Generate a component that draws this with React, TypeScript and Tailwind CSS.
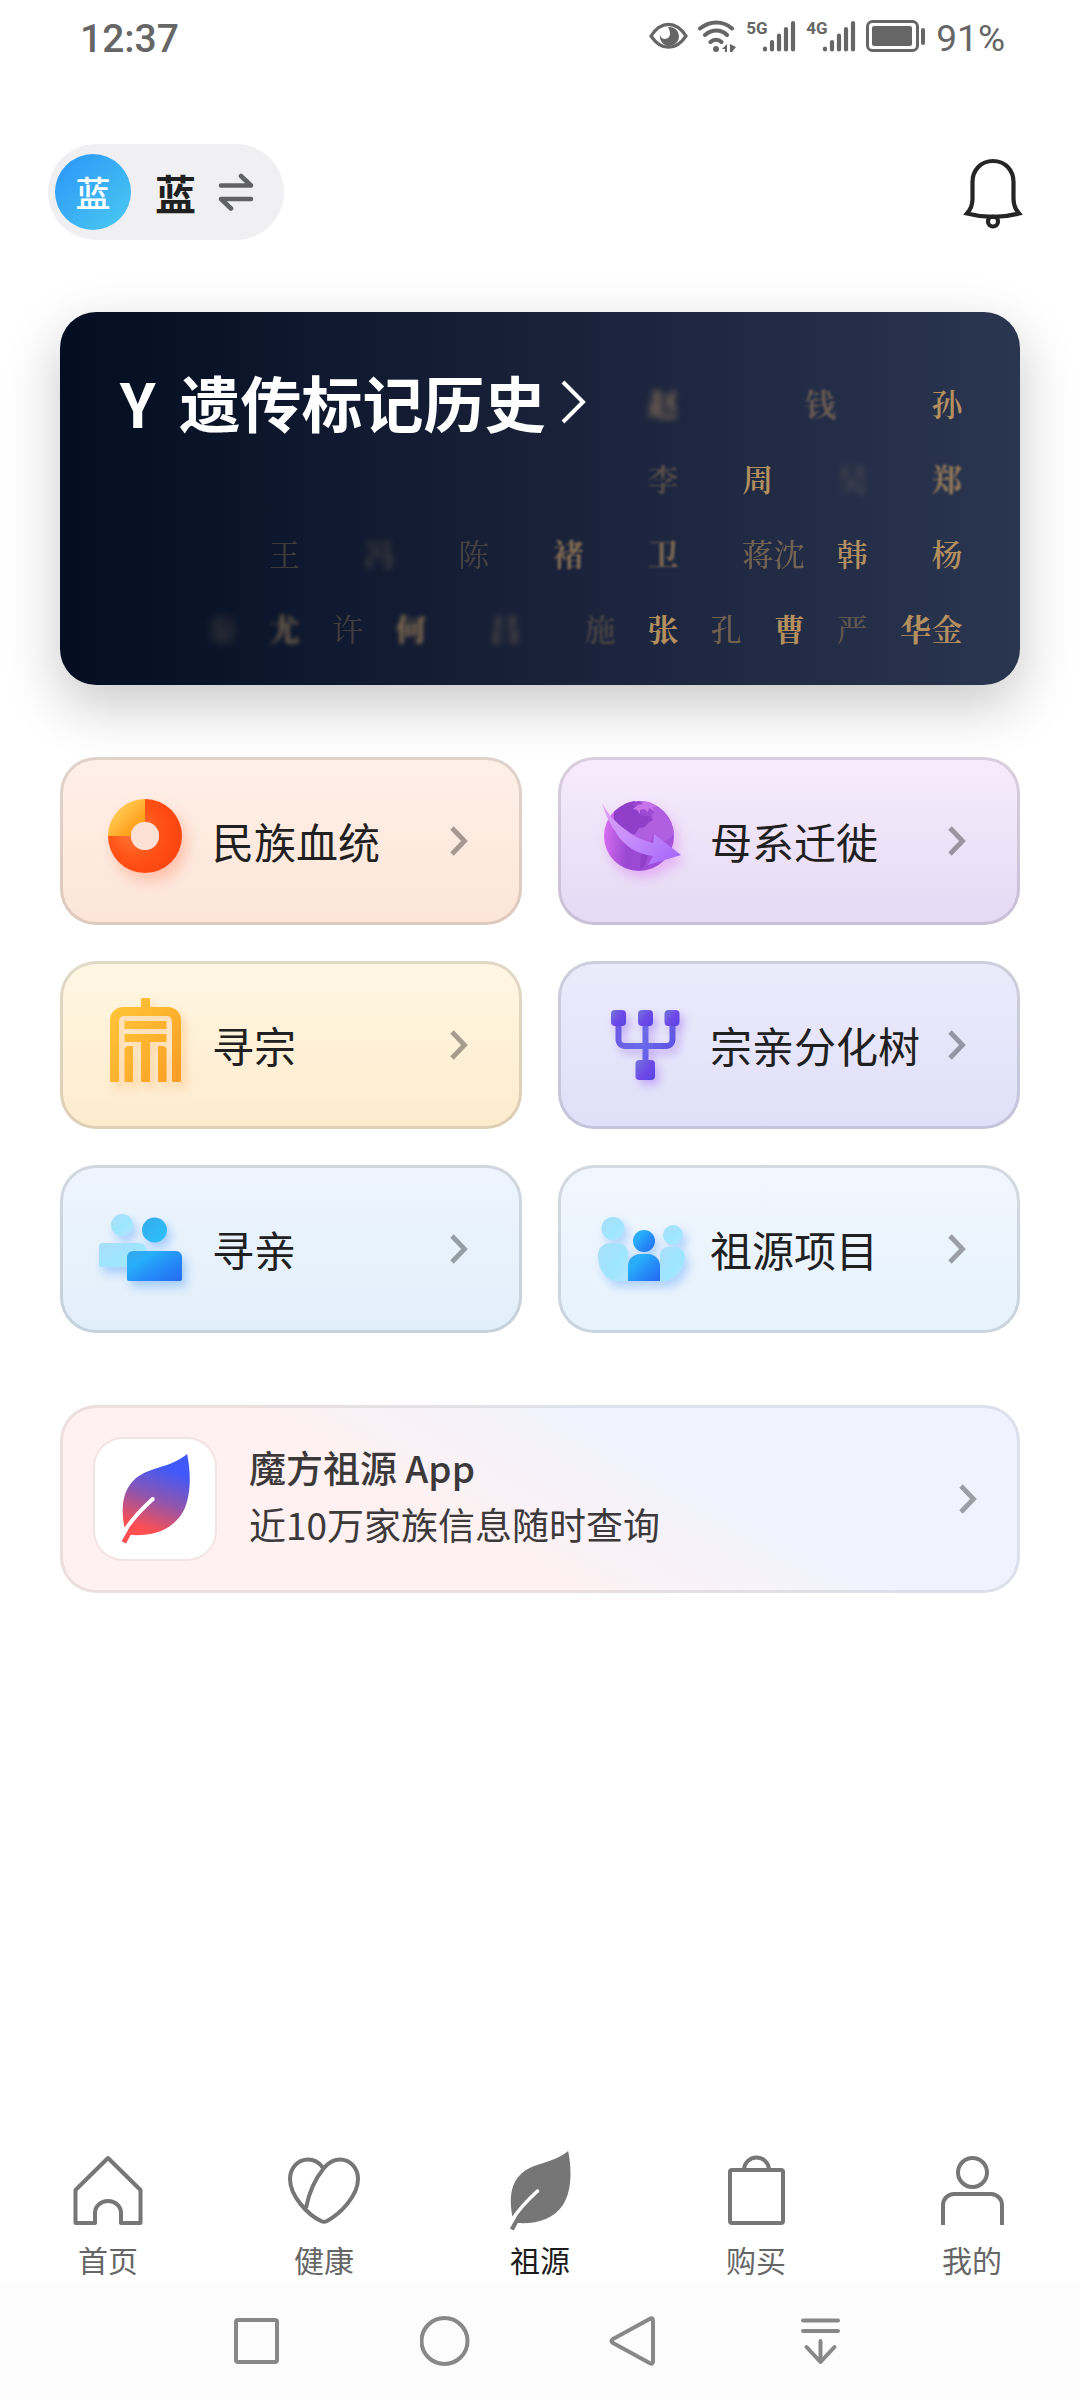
import { useState } from 'react';
import type { ReactNode } from 'react';
import clsx from 'clsx';

type Surname = { char: string; col: string; look: string };

const surnames: Surname[] = [
  { char: '赵', col: 'col-start-15 row-start-1', look: 'font-bold opacity-65 blur-[3px]' },
  { char: '钱', col: 'col-start-20 row-start-1', look: 'font-bold opacity-45 blur-[1px]' },
  { char: '孙', col: 'col-start-24 row-start-1', look: 'font-semibold' },
  { char: '李', col: 'col-start-15 row-start-2', look: 'font-semibold opacity-40 blur-[1px]' },
  { char: '周', col: 'col-start-18 row-start-2', look: 'font-semibold' },
  { char: '吴', col: 'col-start-21 row-start-2', look: 'font-bold opacity-25 blur-[3px]' },
  { char: '郑', col: 'col-start-24 row-start-2', look: 'font-bold opacity-75 blur-[1px]' },
  { char: '王', col: 'col-start-3 row-start-3', look: 'opacity-30' },
  { char: '冯', col: 'col-start-6 row-start-3', look: 'font-bold opacity-30 blur-[3px]' },
  { char: '陈', col: 'col-start-9 row-start-3', look: 'opacity-30' },
  { char: '褚', col: 'col-start-12 row-start-3', look: 'font-bold opacity-65 blur-[1px]' },
  { char: '卫', col: 'col-start-15 row-start-3', look: 'font-bold opacity-60 blur-[1px]' },
  { char: '蒋', col: 'col-start-18 row-start-3', look: 'font-medium opacity-55' },
  { char: '沈', col: 'col-start-19 row-start-3', look: 'font-medium opacity-55' },
  { char: '韩', col: 'col-start-21 row-start-3', look: 'font-semibold' },
  { char: '杨', col: 'col-start-24 row-start-3', look: 'font-semibold' },
  { char: '秦', col: 'col-start-1 row-start-4', look: 'font-bold opacity-25 blur-[4px]' },
  { char: '尤', col: 'col-start-3 row-start-4', look: 'font-bold opacity-60 blur-[2px]' },
  { char: '许', col: 'col-start-5 row-start-4', look: 'opacity-30' },
  { char: '何', col: 'col-start-7 row-start-4', look: 'font-bold opacity-75 blur-[2px]' },
  { char: '吕', col: 'col-start-10 row-start-4', look: 'font-bold opacity-40 blur-[3px]' },
  { char: '施', col: 'col-start-13 row-start-4', look: 'font-semibold opacity-30 blur-[1px]' },
  { char: '张', col: 'col-start-15 row-start-4', look: 'font-bold' },
  { char: '孔', col: 'col-start-17 row-start-4', look: 'font-medium opacity-55' },
  { char: '曹', col: 'col-start-19 row-start-4', look: 'font-bold' },
  { char: '严', col: 'col-start-21 row-start-4', look: 'font-medium opacity-40' },
  { char: '华', col: 'col-start-23 row-start-4', look: 'font-bold' },
  { char: '金', col: 'col-start-24 row-start-4', look: 'font-semibold' },
];

function Chevron({ className }: { className?: string }) {
  return (
    <svg viewBox="0 0 18 30" className={clsx('h-[30px] w-[18px] shrink-0', className)} fill="none" stroke="currentColor" strokeWidth="4.800" aria-hidden="true">
      <path d="M2 2 14.500 15 2 28" />
    </svg>
  );
}

function Leaf({ fill, className }: { fill: string; className: string }) {
  return (
    <svg viewBox="-1 0 64 81" className={className} aria-hidden="true">
      <defs>
        <linearGradient id="leaf" gradientUnits="userSpaceOnUse" x1="48" y1="8" x2="24" y2="76">
          <stop offset="0.1" stopColor="#4159f9" />
          <stop offset="0.5" stopColor="#8f55ad" />
          <stop offset="0.9" stopColor="#fd4f52" />
        </linearGradient>
      </defs>
      <path fill={fill} d="M59.500 0C63.500 19 63 42 54 55 44 69 29 74 8.500 73L4.500 80.500 .5 78.500 7 67 3 66C-1 45 3 32 11 24 24 11 42 14 59.500 0Z" />
      <path d="M28.500 40.500C17 51 9 60 3 69.500" fill="none" stroke="#fff" strokeWidth="3.600" />
      <circle cx="28.500" cy="40.500" r="1.800" fill="#fff" />
    </svg>
  );
}

function DonutIcon() {
  return (
    <svg viewBox="0 0 96 96" className="size-24 drop-shadow-[5px_8px_7px_rgba(255,90,40,0.28)]" aria-hidden="true">
      <defs>
        <radialGradient id="donutRed" cx="0.35" cy="0.45" r="0.65">
          <stop offset="0" stopColor="#ff7a3a" />
          <stop offset="0.55" stopColor="#ff5316" />
          <stop offset="1" stopColor="#fb4410" />
        </radialGradient>
        <linearGradient id="donutGold" x1="0" y1="0" x2="1" y2="1">
          <stop offset="0.2" stopColor="#ffd05c" />
          <stop offset="0.7" stopColor="#ffa41f" />
        </linearGradient>
      </defs>
      <path fill="url(#donutRed)" d="M50 6a37 37 0 1 1-37 37h23a14 14 0 1 0 14-14z" />
      <path fill="url(#donutGold)" d="M50 6a37 37 0 0 0-37 37h23a14 14 0 0 1 14-14z" />
      <circle cx="50" cy="43" r="14" fill="#fbe0d4" />
    </svg>
  );
}

function GlobeIcon() {
  return (
    <svg viewBox="0 0 96 96" className="size-24 drop-shadow-[4px_7px_6px_rgba(214,90,240,0.35)]" aria-hidden="true">
      <defs>
        <linearGradient id="globe" x1="0" y1="0.5" x2="1" y2="0.6">
          <stop offset="0" stopColor="#d56df0" />
          <stop offset="0.35" stopColor="#9a48d2" />
          <stop offset="1" stopColor="#a352dd" />
        </linearGradient>
        <linearGradient id="globeArrow" x1="0" y1="0" x2="1" y2="0.8">
          <stop offset="0" stopColor="#dfa2fa" />
          <stop offset="0.5" stopColor="#c78dfb" />
          <stop offset="1" stopColor="#a869fb" />
        </linearGradient>
      </defs>
      <circle cx="46" cy="43" r="35" fill="url(#globe)" />
      {/* land masses */}
      <path fill="#b563e2" d="M56 9c15 6 24 18 25 33l-12 8-8-9-4 9-17-7-5-5 8-2 3-6 7-1 5-5 3-5-3-4-7-1 3-3z" opacity="0.8" />
      <path fill="#8f3fca" d="M21 19c6-6 13-10 21-11l-2 5 7 4-2 3 6 3 7 0 2 4-5 3-3 4-6 1-4 6-7 1-6 5-8-9zM48 60l7 2-3 10-5 5z" />
      <path fill="#c873ea" d="m40 16 5-4 4-1 1-3 6 1 8 5-5 0 2 4-5-3-1 4-4-3-4 1 0 4-3-4z" />
      <path fill="url(#globeArrow)" d="M9 10C15 21 22 29 33 37c9 7 18 11 27 13l1-9 27 21-33 10 5-9C44 61 31 53 23 40 17 31 12 21 9 10Z" />
    </svg>
  );
}

function ClanIcon() {
  return (
    <svg viewBox="0 0 96 96" className="size-24 drop-shadow-[5px_6px_4px_rgba(255,160,60,0.3)]" aria-hidden="true">
      <defs>
        <linearGradient id="clan" gradientUnits="userSpaceOnUse" x1="15" y1="15" x2="88" y2="70">
          <stop offset="0" stopColor="#ffc338" />
          <stop offset="0.5" stopColor="#feb32f" />
          <stop offset="1" stopColor="#fb9f26" />
        </linearGradient>
      </defs>
      <g fill="url(#clan)">
        <path d="M46 2a1 1 0 0 1 1-1h7a1 1 0 0 1 1 1v8h18a13 13 0 0 1 13 13v61a1 1 0 0 1-1 1h-7a1 1 0 0 1-1-1V24a5 5 0 0 0-5-5H29a5 5 0 0 0-5 5v60a1 1 0 0 1-1 1h-7a1 1 0 0 1-1-1V23a13 13 0 0 1 13-13h18z" />
        <path d="M29.500 24h42v8h-42zM29.500 37h42v8H55v40h-9V45H29.500zM29.500 51l3-2h5.500v36h-8.500zM63 49h5.500l3 2v34H63z" />
      </g>
    </svg>
  );
}

function TreeIcon() {
  return (
    <svg viewBox="0 0 96 96" className="size-24 drop-shadow-[4px_5px_4px_rgba(130,70,240,0.35)]" aria-hidden="true">
      <defs>
        <linearGradient id="treeLine" gradientUnits="userSpaceOnUse" x1="22" y1="20" x2="84" y2="60">
          <stop offset="0" stopColor="#6e54e0" />
          <stop offset="0.5" stopColor="#6a6bea" />
          <stop offset="1" stopColor="#5c4be2" />
        </linearGradient>
        <linearGradient id="treeNode" x1="0" y1="0" x2="1" y2="0.8">
          <stop offset="0" stopColor="#7277da" />
          <stop offset="0.6" stopColor="#6e48e8" />
          <stop offset="1" stopColor="#5b46e2" />
        </linearGradient>
      </defs>
      <path d="M25.500 26v17a6 6 0 0 0 6 6h42a6 6 0 0 0 6-6V26M52.500 26v42" fill="none" stroke="url(#treeLine)" strokeWidth="6" />
      <g fill="url(#treeNode)">
        <rect x="18" y="13" width="15" height="16" rx="4" />
        <rect x="45" y="13" width="15" height="16" rx="4" />
        <rect x="71.500" y="13" width="15" height="16" rx="4" />
        <rect x="42.500" y="63" width="19.500" height="20" rx="4" />
      </g>
    </svg>
  );
}

function KinIcon() {
  return (
    <svg viewBox="0 0 96 96" className="size-24 drop-shadow-[4px_6px_5px_rgba(70,150,255,0.4)]" aria-hidden="true">
      <defs>
        <linearGradient id="kinLight" x1="0" y1="0" x2="1" y2="1">
          <stop offset="0" stopColor="#a8def8" />
          <stop offset="0.6" stopColor="#9fe6ff" />
          <stop offset="1" stopColor="#b4e4ff" />
        </linearGradient>
        <linearGradient id="kinHead" x1="0" y1="0" x2="1" y2="1">
          <stop offset="0" stopColor="#37aaea" />
          <stop offset="1" stopColor="#29c2fb" />
        </linearGradient>
        <linearGradient id="kinBody" x1="0" y1="0" x2="1" y2="0.9">
          <stop offset="0" stopColor="#39a6e8" />
          <stop offset="0.3" stopColor="#27aefa" />
          <stop offset="0.6" stopColor="#258ff8" />
          <stop offset="1" stopColor="#246ff0" />
        </linearGradient>
      </defs>
      <circle cx="27" cy="24" r="11" fill="url(#kinLight)" />
      <path fill="url(#kinLight)" d="M4 46a4 4 0 0 1 4-4h37a6 6 0 0 1 6 6v18H6a2 2 0 0 1-2-2z" />
      <circle cx="59.500" cy="29" r="12.500" fill="url(#kinHead)" />
      <path fill="url(#kinBody)" d="M32 56a6 6 0 0 1 6-6h43a6 6 0 0 1 6 6v22a2 2 0 0 1-2 2H34a2 2 0 0 1-2-2z" />
    </svg>
  );
}

function ProjectIcon() {
  return (
    <svg viewBox="0 0 96 96" className="size-24 drop-shadow-[4px_6px_5px_rgba(70,150,255,0.35)]" aria-hidden="true">
      <g fill="url(#kinLight)">
        <circle cx="20" cy="27.500" r="11.500" />
        <circle cx="80" cy="34" r="10" />
        <path d="M17 42h7a11 11 0 0 1 11 11v27H24C14 80 5 69 5 54a12 12 0 0 1 12-12z" />
        <path d="M67 54a8 8 0 0 1 8-8h7a10 10 0 0 1 10 10c0 13-11 24-25 25z" />
      </g>
      <circle cx="51" cy="40" r="11" fill="url(#kinBody)" />
      <path fill="url(#kinBody)" d="M35 65a12 12 0 0 1 12-12h8a12 12 0 0 1 12 12v15H35z" />
    </svg>
  );
}

const features = [
  { label: '民族血统', icon: <DonutIcon />, tone: 'from-[#fef0e8] to-[#fde5d8]' },
  { label: '母系迁徙', icon: <GlobeIcon />, tone: 'from-[#f8ebfc] to-[#e5daf4]' },
  { label: '寻宗', icon: <ClanIcon />, tone: 'from-[#fff7e3] to-[#fdebcd]' },
  { label: '宗亲分化树', icon: <TreeIcon />, tone: 'from-[#ecebfb] to-[#e1dff9]' },
  { label: '寻亲', icon: <KinIcon />, tone: 'from-[#eef5fe] to-[#e1effa]' },
  { label: '祖源项目', icon: <ProjectIcon />, tone: 'from-[#f1f7fe] to-[#e6f2fc]' },
];

function TabIcon({ children }: { children: ReactNode }) {
  return (
    <svg viewBox="0 0 80 80" className="size-20" fill="none" stroke="#767676" strokeWidth="4" strokeLinejoin="round" aria-hidden="true">
      {children}
    </svg>
  );
}

const tabs = [
  { id: 'home', label: '首页', icon: <TabIcon><path d="M40 7 72.500 39v33H53V62a13 12 0 0 0-26 0v10H7.500V39z" /></TabIcon> },
  {
    id: 'health',
    label: '健康',
    icon: (
      <TabIcon>
        <path d="M39 17C35 11 30 8.500 24 8.500 14 8.500 6 17 6 28c0 17 18 36 31 42q3 1.500 6 0c13-7 31-25 31-42 0-11-8-19.500-18-19.500-6 0-11 2.500-16 8.500-9 11-15 24-18 40" />
      </TabIcon>
    ),
  },
  { id: 'ancestry', label: '祖源', icon: <Leaf fill="#767676" className="h-20 w-16" /> },
  {
    id: 'shop',
    label: '购买',
    icon: <TabIcon><rect x="14" y="19" width="53" height="53" rx="2" /><path d="M28 19a12.500 12.500 0 0 1 25 0" /></TabIcon>,
  },
  {
    id: 'me',
    label: '我的',
    icon: <TabIcon><circle cx="40.500" cy="21.500" r="14.500" /><path d="M11 74V54a11 11 0 0 1 11-11h37a11 11 0 0 1 11 11v20" /></TabIcon>,
  },
];

function Signal({ label }: { label: string }) {
  return (
    <div className="flex items-start">
      <span className="w-4 text-[17px] leading-4 font-bold">{label}</span>
      <svg viewBox="0 0 34 32" className="h-8 w-[34px]" stroke="currentColor" strokeWidth="4.200" strokeLinecap="round" aria-hidden="true">
        <path d="M3 28.500v1M10 22v7.500M17 15.500v14M24 9v20.500M31 3v26.500" />
      </svg>
    </div>
  );
}

function StatusBar() {
  return (
    <div className="flex h-[72px] items-center justify-between pr-[75px] pl-20 font-[Roboto,'Noto_Sans_CJK_SC',sans-serif] text-[#666]">
      <span className="pt-[6px] text-[39px] leading-10 font-medium">12:37</span>
      <div className="flex items-center gap-[10px]">
        <svg viewBox="0 0 39 28" className="h-7 w-[39px]" aria-hidden="true">
          <path d="M2 14C12-1.500 27-1.500 37 14 27 29 12 29 2 14Z" fill="none" stroke="currentColor" strokeWidth="3.200" />
          <path fill="currentColor" d="M19 5a9.500 9.500 0 1 1-8 8c1 3 3 4 5 4a5 5 0 0 0 5-5c0-3-1-5-2-7z" />
        </svg>
        <svg viewBox="0 0 38 32" className="h-8 w-[38px]" fill="none" stroke="currentColor" strokeWidth="4" strokeLinecap="round" aria-hidden="true">
          <path d="M2 8.500c10-8 23-8 32 0M7 15c7-6 16-6 22 0M12.500 22c3-3 8-3 11 0" />
          <circle cx="18" cy="29" r="3" fill="currentColor" stroke="none" />
          <path fill="currentColor" stroke="none" d="M29 24v8h-2v-3h-3zM32 24l6 3-4 5h-2z" />
        </svg>
        <Signal label="5G" />
        <Signal label="4G" />
        <svg viewBox="0 0 60 32" className="h-8 w-[60px]" aria-hidden="true">
          <rect x="1.500" y="1.500" width="50" height="29" rx="5" fill="none" stroke="currentColor" strokeWidth="3" />
          <rect x="6" y="6" width="40" height="20" rx="2" fill="currentColor" />
          <rect x="55" y="8" width="4" height="17" rx="2" fill="currentColor" />
        </svg>
        <span className="pt-[6px] text-[37px] leading-10">91%</span>
      </div>
    </div>
  );
}

export default function App() {
  const [activeTab, setActiveTab] = useState('ancestry');

  return (
    <div className="flex min-h-screen flex-col bg-white font-['Noto_Sans_CJK_SC',sans-serif] text-[#202020]">
      <StatusBar />

      <header className="flex items-center justify-between pt-[72px] pr-14 pl-12">
        <button type="button" className="flex h-24 items-center rounded-full bg-[#f0f0f2] pr-[30px] pl-[7px]">
          <span className="flex size-[76px] items-center justify-center rounded-full bg-linear-to-br from-[#2b93f8] to-[#4dcbf0] text-[35px] font-medium text-white">
            蓝
          </span>
          <span className="ml-6 text-[41px] leading-none font-bold">蓝</span>
          <svg viewBox="0 0 36 38" className="ml-[22px] h-[38px] w-9" fill="none" stroke="#616265" strokeWidth="4.600" strokeLinecap="round" strokeLinejoin="round" aria-hidden="true">
            <path d="M3 12.500h30L23 3M33 26H3l10 9.500" />
          </svg>
        </button>
        <button type="button" aria-label="消息" className="pt-1">
          <svg viewBox="0 0 62 72" className="h-[72px] w-[62px]" fill="none" stroke="#252525" strokeWidth="4.200" aria-hidden="true">
            <path d="M31 3C19 3 10.500 12 10.500 24v17c0 6-1.500 10-5.500 14.500 17 4.500 35 4.500 52 0C53 51 51.500 47 51.500 41V24C51.500 12 43 3 31 3Z" />
            <circle cx="31" cy="63.500" r="5" />
          </svg>
        </button>
      </header>

      <main className="flex flex-1 flex-col gap-[72px] px-[60px] pt-[72px]">
        <a
          href="#y-history"
          className="grid rounded-[36px] bg-linear-to-r from-[#040e22] via-[#192139] to-[#2a354f] shadow-[0_20px_56px_rgba(0,0,0,0.22)]"
        >
          <div className="z-10 col-start-1 row-start-1 flex items-center gap-4 self-start pt-12 pl-[60px] text-white">
            <h1 className="flex gap-6 text-[61px] leading-[84px] font-bold">
              <span>Y</span>
              <span>遗传标记历史</span>
            </h1>
            <svg viewBox="0 0 26 44" className="h-11 w-[26px]" fill="none" stroke="currentColor" strokeWidth="4" aria-hidden="true">
              <path d="M2 2l20 20L2 42" />
            </svg>
          </div>
          <div
            aria-hidden="true"
            className="col-start-1 row-start-1 grid grid-cols-[repeat(24,minmax(0,1fr))] pt-[53px] pr-[57px] pb-5 pl-[146px] font-['Noto_Serif_CJK_SC','Noto_Sans_CJK_SC',serif] text-[31px] leading-[75px] text-[#b5905f]"
          >
            {surnames.map(s => (
              <span key={s.char} className={clsx(s.col, s.look)}>
                {s.char}
              </span>
            ))}
          </div>
        </a>

        <nav className="grid grid-cols-2 gap-9" aria-label="祖源">
          {features.map(f => (
            <a
              key={f.label}
              href={`#${f.label}`}
              className={clsx(
                'flex h-[168px] items-center rounded-[36px] border-[3px] border-black/12 bg-linear-to-b bg-origin-border pr-[51px] pl-8',
                f.tone,
              )}
            >
              {f.icon}
              <span className="ml-[21px] flex-1 text-[42px] leading-none whitespace-nowrap">{f.label}</span>
              <Chevron className="text-black/35" />
            </a>
          ))}
        </nav>

        <a
          href="#app"
          className="flex items-center rounded-[36px] border-[3px] border-black/8 bg-[linear-gradient(30deg,#fff1f1_38%,#f0f3ff_66%)] bg-origin-border py-[29px] pr-10 pl-[30px] text-[#3c393b]"
        >
          <span className="flex size-[124px] items-center justify-center rounded-[30px] border-2 border-black/5 bg-white bg-clip-padding">
            <Leaf fill="url(#leaf)" className="h-[90px] w-[71px]" />
          </span>
          <span className="ml-8 flex flex-1 flex-col pb-[6px] text-[37px] leading-[57px]">
            <span className="font-medium">魔方祖源 App</span>
            <span>近10万家族信息随时查询</span>
          </span>
          <Chevron className="text-black/35" />
        </a>
      </main>

      <nav className="flex" aria-label="导航">
        {tabs.map(tab => (
          <button
            key={tab.id}
            type="button"
            onClick={() => setActiveTab(tab.id)}
            className={clsx(
              'flex flex-1 flex-col items-center gap-[6px] pb-[2px] text-[30px] leading-[44px]',
              activeTab === tab.id ? 'text-[#1c1c1c]' : 'text-[#666]',
            )}
          >
            {tab.icon}
            <span>{tab.label}</span>
          </button>
        ))}
      </nav>

      <div className="bg-[#fcfcfc] px-[164px]">
        <div className="grid h-[117px] grid-cols-4 items-center justify-items-center">
          {[
            { name: '最近任务', shape: <rect x="4" y="4" width="41" height="42" rx="2" /> },
            { name: '主屏幕', shape: <circle cx="24.500" cy="25" r="23" /> },
            { name: '返回', shape: <path d="M42.500 2.500Q45 1.500 45 5v40q0 3.500-2.500 2.500L5 27q-3-2 0-4z" /> },
            { name: '下拉', shape: <path d="M7 4.500h35M7 15h35M24.500 25v21M10.500 31l14 15 14-15" strokeLinecap="round" /> },
          ].map(key => (
            <button key={key.name} type="button" aria-label={key.name}>
              <svg viewBox="0 0 52 52" className="size-[52px]" fill="none" stroke="#888" strokeWidth="4" strokeLinejoin="round" aria-hidden="true">
                {key.shape}
              </svg>
            </button>
          ))}
        </div>
      </div>
    </div>
  );
}
